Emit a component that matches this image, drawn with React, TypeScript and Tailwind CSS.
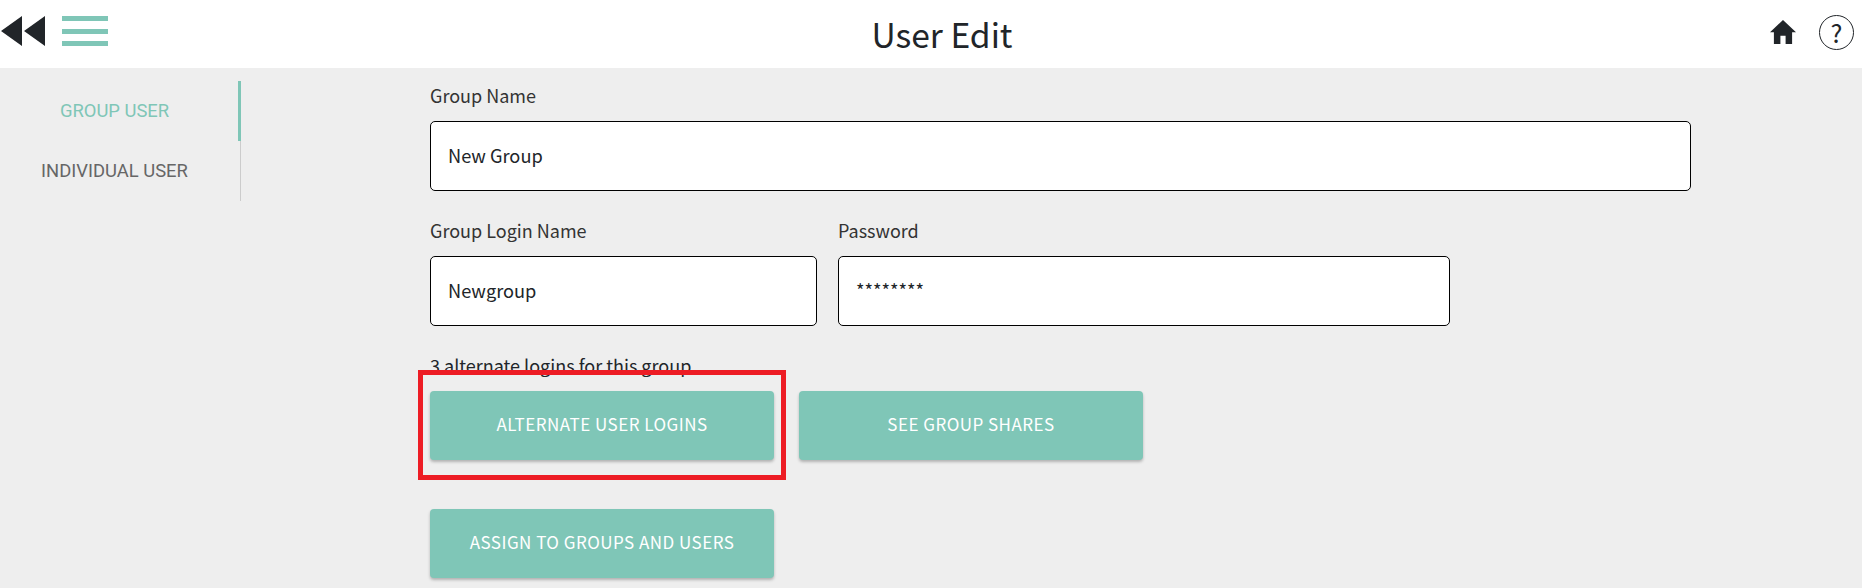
const jp = "font-['Noto_Sans_CJK_JP','Noto_Sans',sans-serif]";

function Header() {
  return (
    <header className="flex h-[68px] items-center justify-between bg-white pr-[8px]">
      <div className="mb-[6px] flex items-center">
        <svg width="44" height="30" viewBox="1 0 44 30" className="ml-[1px]" fill="#212529">
          <path d="M22 0v30L1 15zM45 0v30L24 15z" />
        </svg>
        <div className="ml-[17px] flex h-[30px] w-[46px] flex-col justify-between">
          <div className="h-[5px] bg-[#7fc6b7]" />
          <div className="h-[5px] bg-[#7fc6b7]" />
          <div className="h-[5px] bg-[#7fc6b7]" />
        </div>
      </div>
      <div className="mb-[4px] flex items-center gap-[23px]">
        <svg width="26" height="24" viewBox="2 3 20 17.5" fill="#212529" preserveAspectRatio="none">
          <path d="M10 20.5v-6h4v6h5v-8.5h3L12 3 2 12h3v8.5z" />
        </svg>
        <div className="flex h-[35px] w-[35px] items-center justify-center rounded-full border-[1.5px] border-[#212529] text-[25px] leading-none text-[#212529]">
          ?
        </div>
      </div>
    </header>
  );
}

function Sidebar() {
  return (
    <nav className="mt-[13px] flex h-[120px] w-[241px] shrink-0 flex-col font-['Roboto',sans-serif] text-[18.4px]">
      <div className="flex h-[60px] items-center justify-center border-r-[3px] border-[#7fc6b7] pr-[9px] text-[#7fc6b7]">
        GROUP USER
      </div>
      <div className="flex h-[60px] items-center justify-center border-r border-[#cccccc] pr-[11px] text-[#666666]">
        INDIVIDUAL USER
      </div>
    </nav>
  );
}

function Field({ label, value, className }: { label: string; value: string; className: string }) {
  return (
    <div className={className}>
      <label className="block h-[39px] text-[18px] leading-[26px] text-[#333333]">{label}</label>
      <div className="flex h-[70px] items-center rounded-[5px] border border-black bg-white pl-[17px] text-[18.2px] text-[#212529]">
        {value}
      </div>
    </div>
  );
}

function ActionButton({ label }: { label: string }) {
  return (
    <button className="h-[69px] w-[344px] rounded-[4px] bg-[#7fc6b7] pb-[3px] text-[17px] font-normal tracking-[0.48px] text-white shadow-[0_2px_3px_rgba(0,0,0,0.25)]">
      {label}
    </button>
  );
}

export default function App() {
  return (
    <div className={`h-[588px] w-[1862px] overflow-hidden bg-[#eeeeee] ${jp}`}>
      <Header />
      <div className="flex">
        <Sidebar />
        <main className="relative ml-[189px] w-[1261px] pt-[14px]">
          <Field label="Group Name" value="New Group" className="w-full" />
          <div className="mt-[26px] flex gap-[21px]">
            <Field label="Group Login Name" value="Newgroup" className="w-[387px]" />
            <Field label="Password" value="********" className="w-[612px]" />
          </div>
          <p className="mt-[26px] h-[39px] text-[18px] leading-[26px] text-[#212529]">3 alternate logins for this group</p>
          <div className="flex gap-[25px]">
            <ActionButton label="ALTERNATE USER LOGINS" />
            <ActionButton label="SEE GROUP SHARES" />
          </div>
          <div className="mt-[49px]">
            <ActionButton label="ASSIGN TO GROUPS AND USERS" />
          </div>
          {/* red highlight drawn over the screenshot */}
          <div className="absolute left-[-12px] top-[302px] h-[110px] w-[368px] border-[5px] border-[#ed1c24]" />
        </main>
      </div>
      <h1 className="absolute left-0 top-0 flex h-[68px] w-[1884px] items-center justify-center text-[33.6px] font-normal text-[#212529]">
        User Edit
      </h1>
    </div>
  );
}
